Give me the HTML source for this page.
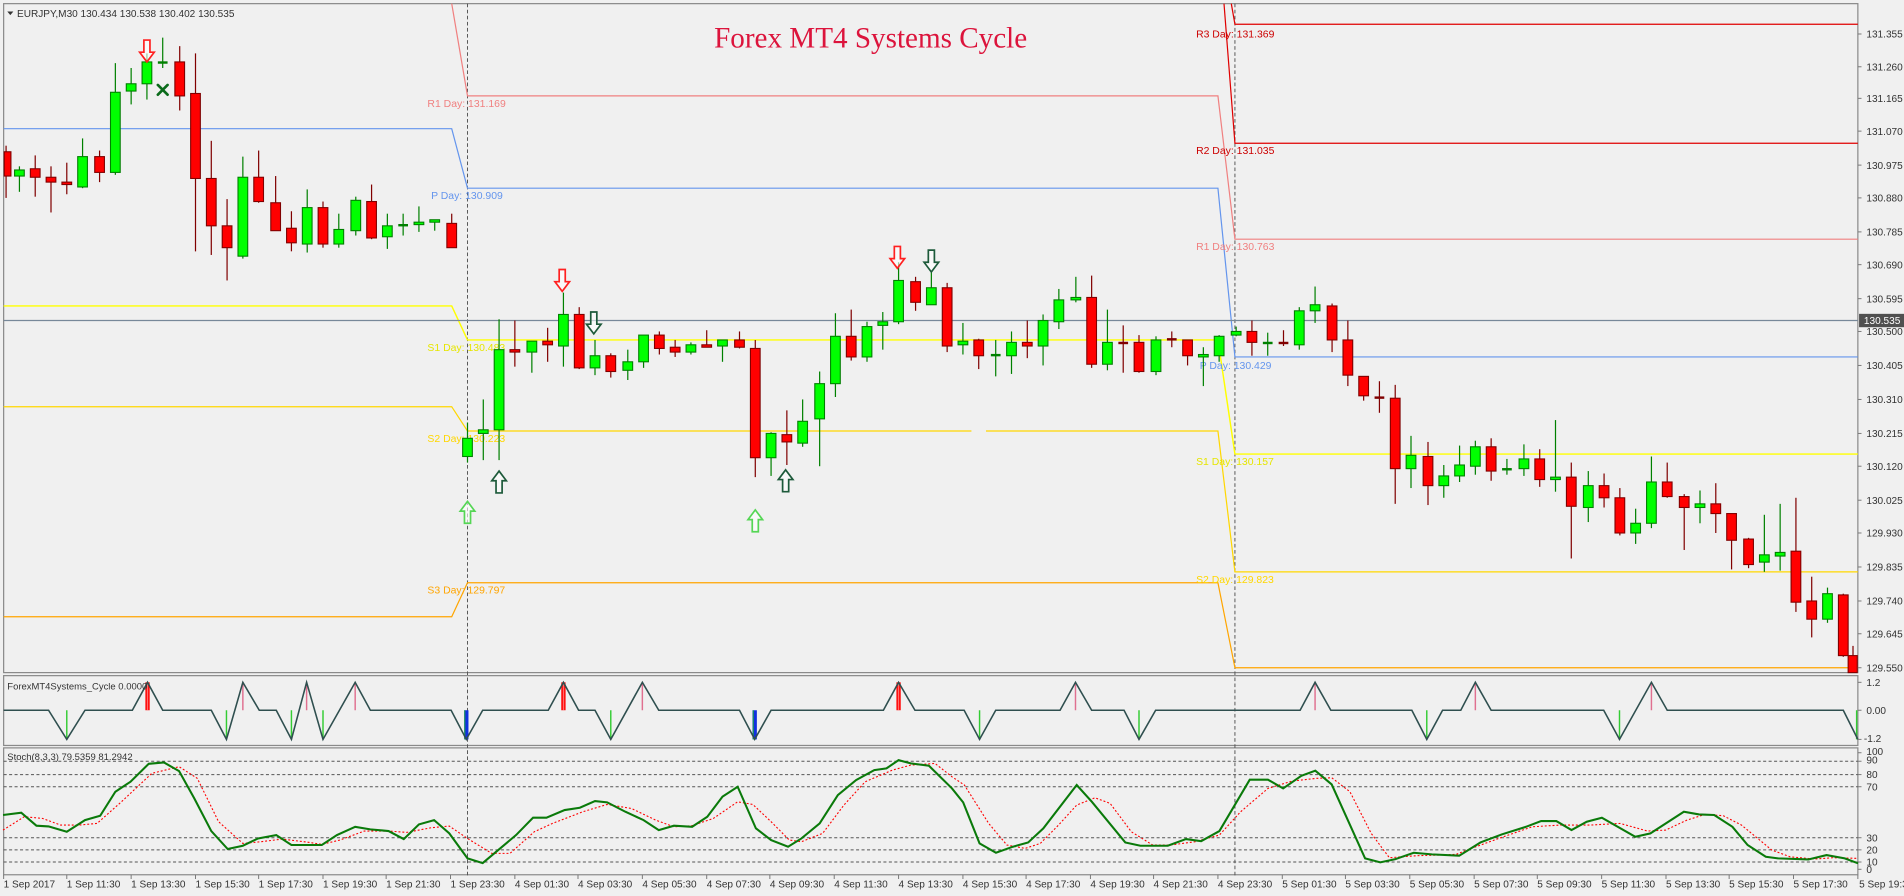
<!DOCTYPE html>
<html><head><meta charset="utf-8">
<style>
html,body{margin:0;padding:0;background:#f0f0f0;overflow:hidden}
svg{display:block}
text{font-family:"Liberation Sans",sans-serif}
.ax{font-size:8.3px;fill:#333}
.tl{font-size:8.3px;fill:#333}
.pl{font-size:8.6px}
</style></head>
<body>
<svg id="s" width="1904" height="896" viewBox="0 0 1568 738" preserveAspectRatio="none" xmlns="http://www.w3.org/2000/svg">
<rect x="0" y="0" width="1568" height="738" fill="#f0f0f0"/>
<!-- pane borders -->
<g fill="none" stroke="#8a8a8a" stroke-width="1">
<rect x="3" y="3" width="1527" height="551"/>
<rect x="3" y="556.5" width="1527" height="57.5"/>
<rect x="3" y="616" width="1527" height="104.5"/>
</g>
<!-- stoch levels -->
<g stroke="#555" stroke-width="0.8" stroke-dasharray="2.5,2">
<line x1="3" y1="627" x2="1530" y2="627"/><line x1="3" y1="638" x2="1530" y2="638"/>
<line x1="3" y1="648" x2="1530" y2="648"/><line x1="3" y1="690" x2="1530" y2="690"/>
<line x1="3" y1="700" x2="1530" y2="700"/><line x1="3" y1="710" x2="1530" y2="710"/>
</g>
<!-- period separators -->
<g stroke="#555" stroke-width="0.8" stroke-dasharray="3,2">
<line x1="385" y1="3" x2="385" y2="721"/><line x1="1017" y1="3" x2="1017" y2="721"/>
</g>
<!-- pivot lines -->
<g fill="none" stroke-width="1">
<polyline stroke="#6495ed" points="3,106 372,106 385,155 1003,155 1017,294 1530,294"/>
<polyline stroke="#f08080" points="372,3 385,79 1003,79 1017,197 1530,197"/>
<polyline stroke="#e00000" points="1008,3 1017,118 1530,118"/>
<polyline stroke="#e00000" points="1014,3 1017,20 1530,20"/>
<polyline stroke="#ffff00" stroke-width="1.2" points="3,252 372,252 385,280 1003,280 1017,374 1530,374"/>
<polyline stroke="#ffd700" points="3,335 372,335 385,355 800,355"/>
<polyline stroke="#ffd700" points="812,355 1003,355 1017,471 1530,471"/>
<polyline stroke="#ffa500" points="3,508 372,508 385,480 1003,480 1017,550 1530,550"/>
<line x1="3" y1="264" x2="1530" y2="264" stroke="#778899" stroke-width="1"/>
</g>
<!-- pivot labels -->
<text class="pl" x="352" y="88" fill="#f08080">R1 Day: 131.169</text>
<text class="pl" x="355" y="164" fill="#6495ed">P Day: 130.909</text>
<text class="pl" x="352" y="289" fill="#e6e600">S1 Day: 130.483</text>
<text class="pl" x="352" y="364" fill="#ffd700">S2 Day: 130.223</text>
<text class="pl" x="352" y="489" fill="#ffa500">S3 Day: 129.797</text>
<text class="pl" x="985" y="31" fill="#cc0000">R3 Day: 131.369</text>
<text class="pl" x="985" y="127" fill="#cc0000">R2 Day: 131.035</text>
<text class="pl" x="985" y="206" fill="#f08080">R1 Day: 130.763</text>
<text class="pl" x="988" y="304" fill="#6495ed">P Day: 130.429</text>
<text class="pl" x="985" y="383" fill="#e6e600">S1 Day: 130.157</text>
<text class="pl" x="985" y="480" fill="#ffd700">S2 Day: 129.823</text>

<g id="candles"></g>
<g id="arrows"></g>
<!-- X mark -->
<g stroke="#0b6b1b" stroke-width="2.2" stroke-linecap="round"><line x1="130" y1="70" x2="138" y2="78"/><line x1="138" y1="70" x2="130" y2="78"/></g>

<!-- title & header -->
<text x="717" y="39" text-anchor="middle" font-family="Liberation Serif" style="font-family:'Liberation Serif',serif;font-size:24px" fill="#dc143c">Forex MT4 Systems Cycle</text>
<path d="M6,9.5 L11,9.5 L8.5,12.5 Z" fill="#333"/>
<text x="14" y="14" style="font-size:8.3px" fill="#333">EURJPY,M30  130.434 130.538 130.402 130.535</text>

<!-- cycle pane -->
<g id="cycle"></g>
<text x="6" y="568" style="font-size:7.8px" fill="#333">ForexMT4Systems_Cycle 0.0000</text>
<!-- stoch -->
<g id="stoch"></g>
<text x="6" y="626" style="font-size:7.8px" fill="#333">Stoch(8,3,3) 79.5359 81.2942</text>

<!-- price axis -->
<g class="ax">
<text x="1537" y="31">131.355</text><text x="1537" y="58">131.260</text><text x="1537" y="84">131.165</text>
<text x="1537" y="111">131.070</text><text x="1537" y="139">130.975</text><text x="1537" y="166">130.880</text>
<text x="1537" y="194">130.785</text><text x="1537" y="221">130.690</text><text x="1537" y="249">130.595</text>
<text x="1537" y="276">130.500</text><text x="1537" y="304">130.405</text><text x="1537" y="332">130.310</text>
<text x="1537" y="360">130.215</text><text x="1537" y="387">130.120</text><text x="1537" y="415">130.025</text>
<text x="1537" y="442">129.930</text><text x="1537" y="470">129.835</text><text x="1537" y="498">129.740</text>
<text x="1537" y="525">129.645</text><text x="1537" y="553">129.550</text>
<text x="1537" y="565">1.2</text><text x="1537" y="588">0.00</text><text x="1535" y="611">-1.2</text>
<text x="1537" y="622">100</text><text x="1537" y="629">90</text><text x="1537" y="641">80</text><text x="1537" y="651">70</text>
<text x="1537" y="693">30</text><text x="1537" y="703">20</text><text x="1537" y="713">10</text><text x="1537" y="719">0</text>
</g>
<rect x="1531" y="258.5" width="37" height="11" fill="#505050"/>
<text x="1535" y="267" style="font-size:8.3px" fill="#fff">130.535</text>
<g id="ticks" stroke="#777" stroke-width="0.8"></g>

<!-- time axis -->
<g class="tl">
<text x="3" y="731">1 Sep 2017</text><text x="55" y="731">1 Sep 11:30</text><text x="108" y="731">1 Sep 13:30</text>
<text x="161" y="731">1 Sep 15:30</text><text x="213" y="731">1 Sep 17:30</text><text x="266" y="731">1 Sep 19:30</text>
<text x="318" y="731">1 Sep 21:30</text><text x="371" y="731">1 Sep 23:30</text><text x="424" y="731">4 Sep 01:30</text>
<text x="476" y="731">4 Sep 03:30</text><text x="529" y="731">4 Sep 05:30</text><text x="582" y="731">4 Sep 07:30</text>
<text x="634" y="731">4 Sep 09:30</text><text x="687" y="731">4 Sep 11:30</text><text x="740" y="731">4 Sep 13:30</text>
<text x="793" y="731">4 Sep 15:30</text><text x="845" y="731">4 Sep 17:30</text><text x="898" y="731">4 Sep 19:30</text>
<text x="950" y="731">4 Sep 21:30</text><text x="1003" y="731">4 Sep 23:30</text><text x="1056" y="731">5 Sep 01:30</text>
<text x="1108" y="731">5 Sep 03:30</text><text x="1161" y="731">5 Sep 05:30</text><text x="1214" y="731">5 Sep 07:30</text>
<text x="1266" y="731">5 Sep 09:30</text><text x="1319" y="731">5 Sep 11:30</text><text x="1372" y="731">5 Sep 13:30</text>
<text x="1424" y="731">5 Sep 15:30</text><text x="1477" y="731">5 Sep 17:30</text><text x="1531" y="731">5 Sep 19:30</text>
</g>
</svg>
<script>
var NS="http://www.w3.org/2000/svg";
function el(p,t,a){var e=document.createElementNS(NS,t);for(var k in a)e.setAttribute(k,a[k]);p.appendChild(e);return e;}
var C="r 5 125 145 120 163|g 16 140 145 137 158|r 29 139 146 128 162|r 42 146 150 137 175|r 55 150 152 134 160|g 68 129 154 114 155|r 82 129 142 124 150|g 95 76 142 52 144|g 108 69 75 56 86|g 121 51 69 44 82|g 134 51 52 31 56|r 148 51 79 38 91|r 161 77 147 44 207|r 174 147 186 116 210|r 187 186 204 164 231|g 200 146 211 129 213|r 213 146 166 124 167|r 227 167 190 145 190|r 240 188 200 174 207|g 253 171 201 156 208|r 266 171 201 166 204|g 279 189 201 176 204|g 293 165 190 162 194|r 306 166 196 152 197|g 319 186 195 176 205|g 332 185 186 176 194|g 345 183 185 170 191|g 358 181 183 181 190|r 372 184 204 176 204|g 385 361 376 348 381|g 398 354 357 329 379|g 411 288 354 263 379|r 424 288 290 264 302|g 438 281 290 281 307|r 451 281 284 270 298|g 464 259 285 241 302|r 477 259 303 253 304|g 490 293 303 280 309|r 503 293 306 291 311|g 517 298 305 288 313|g 530 276 298 276 303|r 543 276 287 273 292|r 556 286 290 280 294|g 569 284 290 282 292|r 582 284 286 272 286|g 595 280 285 280 298|r 609 280 286 273 287|r 622 287 377 280 393|g 635 357 377 356 392|r 648 358 364 338 383|g 661 347 365 329 368|g 675 316 345 306 384|g 688 277 316 258 327|r 701 277 294 255 297|g 714 269 294 265 298|g 727 265 268 257 288|g 740 231 265 216 267|r 754 232 249 228 256|g 767 237 251 224 251|r 780 237 285 233 290|g 793 281 284 266 292|r 806 280 293 279 304|g 820 292 293 280 310|g 833 282 293 273 308|r 846 282 285 264 295|g 859 264 285 259 301|g 872 247 265 238 271|g 886 245 247 228 249|r 899 245 300 227 303|g 912 282 300 255 305|r 925 282 283 268 307|r 938 282 306 276 307|g 952 280 306 277 309|r 965 279 280 273 286|r 978 280 293 280 301|g 991 292 294 286 318|g 1004 277 293 276 298|g 1018 273 276 269 277|r 1031 273 282 264 293|g 1044 282 283 274 293|r 1057 282 283 272 285|g 1070 256 284 253 288|g 1083 251 256 236 266|r 1097 252 280 250 290|r 1110 280 309 264 318|r 1123 310 326 310 330|r 1136 327 328 314 340|r 1149 328 386 317 415|g 1162 375 386 359 402|r 1176 376 400 364 416|g 1189 392 400 383 410|g 1202 383 392 367 397|g 1215 368 384 363 391|r 1228 368 388 361 396|g 1241 386 387 378 391|g 1255 378 386 366 392|r 1268 378 395 370 401|g 1281 393 395 346 405|r 1294 393 417 381 460|g 1308 400 418 388 430|r 1321 400 410 390 418|r 1334 410 439 402 441|g 1347 431 439 419 448|g 1360 397 431 376 435|r 1373 397 409 381 410|r 1387 409 418 407 453|g 1400 415 418 404 431|r 1413 415 423 398 439|r 1426 423 445 423 469|r 1440 444 465 443 468|g 1453 457 463 424 471|g 1466 455 458 415 470|r 1479 454 496 410 504|r 1492 495 510 475 525|g 1505 489 510 484 513|r 1518 490 540 489 541|r 1526 540 554 532 554";
var cg=document.getElementById("candles");
C.split("|").forEach(function(s){var a=s.split(" ");var t=a[0],x=+a[1],o=+a[2],c=+a[3],h=+a[4],l=+a[5];
var w=t=="g"?"#008000":"#800000",f=t=="g"?"#00ff00":"#ff0000";
var x0=Math.max(x-4,3.5),x1=Math.min(x+4,1529.5);
el(cg,"line",{x1:x,y1:h,x2:x,y2:l,stroke:w,"stroke-width":1});
if(c-o<2){el(cg,"rect",{x:x0,y:o-0.5,width:x1-x0,height:2,fill:w});}
else el(cg,"rect",{x:x0,y:o,width:x1-x0,height:c-o,fill:f,stroke:w,"stroke-width":0.9});});
// arrows
var ag=document.getElementById("arrows");
function down(cx,t,col){el(ag,"path",{d:"M"+(cx-2.5)+","+t+" L"+(cx+2.5)+","+t+" L"+(cx+2.5)+","+(t+10)+" L"+(cx+6)+","+(t+10)+" L"+cx+","+(t+18)+" L"+(cx-6)+","+(t+10)+" L"+(cx-2.5)+","+(t+10)+" Z",fill:"#fff","fill-opacity":0.6,stroke:col,"stroke-width":1.4});}
function up(cx,t,col){el(ag,"path",{d:"M"+cx+","+t+" L"+(cx+6)+","+(t+8)+" L"+(cx+2.5)+","+(t+8)+" L"+(cx+2.5)+","+(t+18)+" L"+(cx-2.5)+","+(t+18)+" L"+(cx-2.5)+","+(t+8)+" L"+(cx-6)+","+(t+8)+" Z",fill:"#fff","fill-opacity":0.6,stroke:col,"stroke-width":1.4});}
down(121,33,"#ff2020");down(463,222,"#ff2020");down(739,203,"#ff2020");
down(489,257,"#1d5a3a");down(767,206,"#1d5a3a");
up(411,388,"#1d5a3a");up(647,387,"#1d5a3a");
up(385,413,"#55d655");up(622,420,"#55d655");
// cycle
var cy=document.getElementById("cycle");
var P="3,585 40,585 55,609 70,585 109,585 121.5,562 134,585 174,585 186.5,609 200,562 213.5,585 227.5,585 240,609 252.5,562 266,609 292.5,562 305,585 371.5,585 384,609 397.5,585 451.5,585 464,562 476.5,585 490,585 503,609 529,562 542.5,585 609,585 621.5,609 635,585 727.5,585 740,562 753.5,585 794,585 806.7,609 820,585 873,585 885.7,562 899,585 925.7,585 938,609 951.7,585 1070.7,585 1083,562 1096,585 1162.7,585 1175,609 1188,585 1203,585 1215,562 1228,585 1320.7,585 1333.7,609 1360,562 1373,585 1518,585 1530,609";
[55,186.5,240,266,503,806.7,938,1175,1333.7,1529].forEach(function(x){el(cy,"line",{x1:x,y1:585,x2:x,y2:609,stroke:"#33cc33","stroke-width":1.2});});
[200,252.5,292.5,529,885.7,1083,1215,1360].forEach(function(x){el(cy,"line",{x1:x,y1:562,x2:x,y2:585,stroke:"#e07090","stroke-width":1.2});});
[121.5,464,740].forEach(function(x){el(cy,"rect",{x:x-1.8,y:562,width:3.6,height:23,fill:"#ff1010"});el(cy,"line",{x1:x,y1:562,x2:x,y2:585,stroke:"#ff9090","stroke-width":0.6});});
[384,621.5].forEach(function(x){el(cy,"rect",{x:x-1.8,y:585,width:3.6,height:24,fill:"#1030e0"});el(cy,"line",{x1:x-1.2,y1:585,x2:x-1.2,y2:609,stroke:"#22bb22","stroke-width":0.7});});
el(cy,"polyline",{points:P,fill:"none",stroke:"#2f4f4f","stroke-width":1.3});
// stoch
function cv(arr,off){return arr.map(function(p){return (off+p[0]/2).toFixed(1)+","+(613.7+p[1]/3.643).toFixed(1);}).join(" ");}
var G1=[[5,210],[35,203],[60,242],[80,244],[110,260],[140,225],[165,212],[190,140],[215,110],[245,56],[270,52],[295,78],[320,160],[348,258],[375,312],[400,302],[425,280],[455,270],[480,300],[530,300],[555,270],[585,245],[610,253],[640,258],[665,282],[690,238],[715,225],[740,265],[770,340],[795,354],[850,270],[878,218],[900,218],[930,195],[955,188],[980,168],[1000,172],[1030,200],[1060,225],[1085,255],[1110,242],[1140,245],[1165,215],[1190,155],[1215,125],[1245,250],[1270,285],[1298,305],[1320,280],[1350,235],[1380,150],[1410,105],[1440,75],[1460,70],[1480,45],[1500,55],[1530,62],[1568,130]];
var G2=[[18,172],[45,295],[72,323],[100,305],[125,292],[150,250],[205,120],[230,170],[285,292],[310,302],[355,302],[385,282],[410,288],[440,258],[490,104],[520,104],[545,130],[575,92],[598,77],[625,118],[680,340],[705,352],[730,342],[760,323],[790,328],[835,332],[870,292],[905,268],[945,245],[970,228],[995,228],[1020,255],[1045,230],[1070,218],[1125,275],[1150,265],[1205,200],[1230,208],[1255,210],[1285,245],[1310,300],[1340,335],[1360,340],[1410,343],[1440,330],[1470,340],[1492,355]];
var R1=[[5,255],[40,215],[70,220],[100,240],[130,240],[160,235],[200,170],[250,85],[295,65],[325,100],[360,230],[400,295],[430,290],[465,282],[510,292],[530,298],[560,285],[600,258],[640,258],[670,262],[710,248],[740,243],[770,280],[810,325],[840,325],[880,260],[910,235],[960,200],[1000,178],[1040,190],[1080,225],[1110,245],[1140,242],[1175,220],[1215,170],[1240,178],[1270,230],[1300,285],[1320,290],[1355,265],[1390,180],[1425,110],[1470,75],[1500,60],[1540,55],[1568,95]];
var R2=[[20,120],[60,235],[90,300],[120,310],[145,295],[175,240],[205,180],[235,158],[260,175],[295,260],[330,300],[360,300],[400,290],[440,270],[475,200],[520,130],[560,108],[600,100],[625,98],[655,140],[690,265],[720,338],[765,332],[800,330],[830,328],[855,310],[900,280],[955,245],[1000,240],[1050,240],[1100,235],[1145,258],[1175,255],[1210,225],[1240,208],[1270,212],[1300,240],[1350,315],[1380,335],[1420,342],[1450,338],[1492,340]];
var sg=document.getElementById("stoch");
el(sg,"polyline",{points:cv(R1,0)+" "+cv(R2,784.2),fill:"none",stroke:"#ff0000","stroke-width":0.9,"stroke-dasharray":"1.6,1.6"});
el(sg,"polyline",{points:cv(G1,0)+" "+cv(G2,784.2),fill:"none",stroke:"#0a7a0a","stroke-width":1.7});
// ticks
var tk=document.getElementById("ticks");
[28,55,81,108,136,163,191,218,246,273,301,329,357,384,412,439,467,495,522,550,562,585,609,620,627,638,648,690,700,710,716].forEach(function(y){el(tk,"line",{x1:1530,y1:y,x2:1533,y2:y});});
[3,55,108,161,213,266,318,371,424,476,529,582,634,687,740,793,845,898,950,1003,1056,1108,1161,1214,1266,1319,1372,1424,1477,1530].forEach(function(x){el(tk,"line",{x1:x,y1:720.5,x2:x,y2:724});});
</script>
</body></html>
